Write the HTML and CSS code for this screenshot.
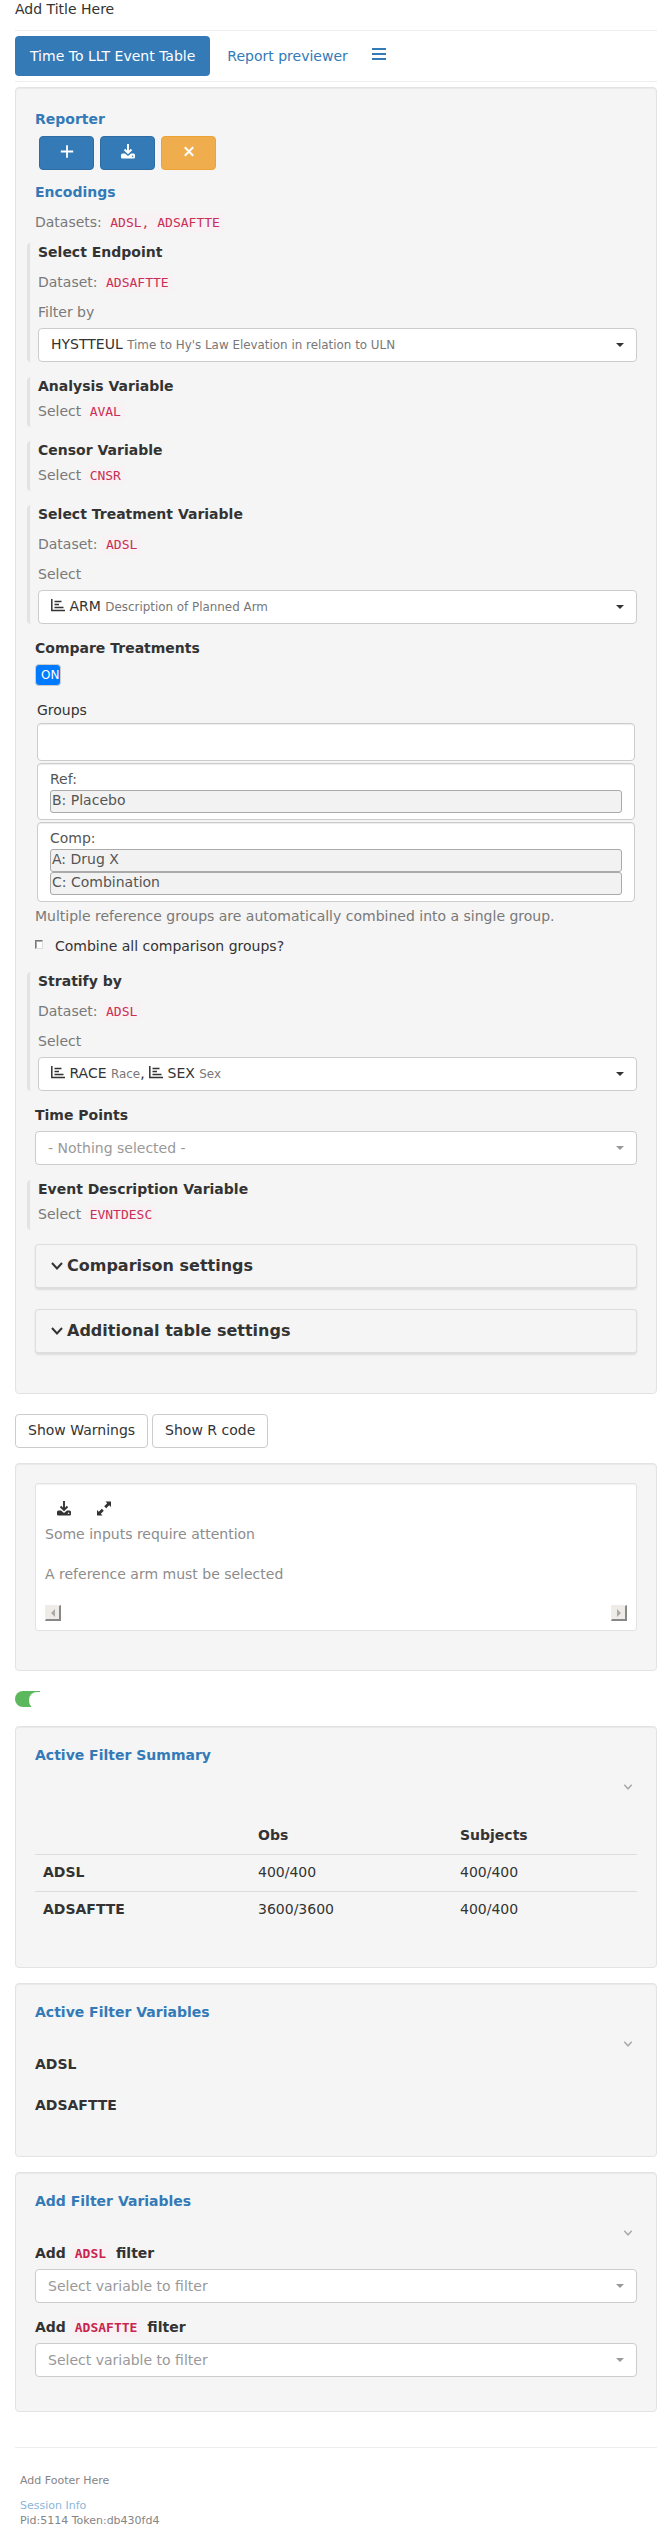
FILE: index.html
```html
<!DOCTYPE html>
<html lang="en">
<head>
<meta charset="utf-8">
<title>Add Title Here</title>
<link rel="stylesheet" href="styles.css">
</head>
<body>
<svg class="defs" width="0" height="0">
  <symbol id="download" viewBox="0 0 14 15"><path d="M7 0V9M3.500 5.500L7 9l3.500-3.500" fill="none" stroke="currentColor" stroke-width="1.900"/><path d="M1.500 9.500H4L7 12l3-2.500h2.500A1.500 1.500 0 0 1 14 11v2.300a1.200 1.200 0 0 1-1.200 1.200H1.200A1.200 1.200 0 0 1 0 13.300V11a1.500 1.500 0 0 1 1.500-1.500zM11.600 11.400a.8.8 0 1 0 0 1.600.8.8 0 0 0 0-1.600z" fill="currentColor" fill-rule="evenodd"/></symbol>
  <symbol id="expand" viewBox="0 0 14 14"><path d="M8.500 0H14V5.500L12.200 3.800 9.200 6.800 7.200 4.800l3-3zM5.500 14H0V8.500l1.800 1.700 3-3 2 2-3 3z" fill="currentColor"/></symbol>
  <symbol id="chart" viewBox="0 0 14 13"><path d="M.8 0V11.500H14M3.500 2.500H10.500M3.500 5.500H8M3.500 8.500H12.500" fill="none" stroke="currentColor" stroke-width="1.500"/></symbol>
  <symbol id="chevron" viewBox="0 0 12 8"><path d="M1 1l5 5.500L11 1" fill="none" stroke="currentColor" stroke-width="2"/></symbol>
</svg>
<header class="title">Add Title Here</header>
<nav class="tabs">
  <a class="tab tab-active">Time To LLT Event Table</a>
  <a class="tab">Report previewer</a>
  <svg class="menu" viewBox="0 0 14 12"><path d="M0 1h14M0 6h14M0 11h14" stroke="currentColor" stroke-width="2"/></svg>
</nav>
<main>
  <section class="well encodings">
    <h4 class="heading">Reporter</h4>
    <div class="reporter">
      <button class="btn primary"><svg class="ico" viewBox="0 0 14 14"><path d="M7 .8v12.400M.8 7h12.400" stroke="currentColor" stroke-width="1.800"/></svg></button>
      <button class="btn primary"><svg class="ico"><use href="#download"/></svg></button>
      <button class="btn warning"><svg class="ico" viewBox="0 0 14 14"><path d="M2.800 2.800l8.400 8.400M11.200 2.800l-8.400 8.400" stroke="currentColor" stroke-width="2"/></svg></button>
    </div>
    <h4 class="heading">Encodings</h4>
    <p class="help datasets">Datasets: <code>ADSL, ADSAFTTE</code></p>
    <div class="extract endpoint">
      <b>Select Endpoint</b>
      <p class="help">Dataset: <code>ADSAFTTE</code></p>
      <p class="help">Filter by</p>
      <div class="select"><span>HYSTTEUL <small>Time to Hy's Law Elevation in relation to ULN</small></span><i class="caret"></i></div>
    </div>
    <div class="extract compact"><b>Analysis Variable</b><p class="help">Select <code>AVAL</code></p></div>
    <div class="extract compact"><b>Censor Variable</b><p class="help">Select <code>CNSR</code></p></div>
    <div class="extract">
      <b>Select Treatment Variable</b>
      <p class="help">Dataset: <code>ADSL</code></p>
      <p class="help">Select</p>
      <div class="select"><span><svg class="chart"><use href="#chart"/></svg> ARM <small>Description of Planned Arm</small></span><i class="caret"></i></div>
    </div>
    <b class="label">Compare Treatments</b>
    <div class="on-switch">ON</div>
    <div class="groups">
      <div class="groups-label">Groups</div>
      <div class="bucket bucket-empty"></div>
      <div class="bucket"><div class="bucket-name">Ref:</div><div class="item">B: Placebo</div></div>
      <div class="bucket"><div class="bucket-name">Comp:</div><div class="item">A: Drug X</div><div class="item">C: Combination</div></div>
    </div>
    <p class="help note">Multiple reference groups are automatically combined into a single group.</p>
    <label class="check"><i class="box"></i>Combine all comparison groups?</label>
    <div class="extract">
      <b>Stratify by</b>
      <p class="help">Dataset: <code>ADSL</code></p>
      <p class="help">Select</p>
      <div class="select"><span><svg class="chart"><use href="#chart"/></svg> RACE <small>Race</small>, <svg class="chart"><use href="#chart"/></svg> SEX <small>Sex</small></span><i class="caret"></i></div>
    </div>
    <b class="label">Time Points</b>
    <div class="select placeholder time-points"><span>- Nothing selected -</span><i class="caret"></i></div>
    <div class="extract compact"><b>Event Description Variable</b><p class="help">Select <code>EVNTDESC</code></p></div>
    <div class="panel"><svg class="chevron"><use href="#chevron"/></svg>Comparison settings</div>
    <div class="panel"><svg class="chevron"><use href="#chevron"/></svg>Additional table settings</div>
  </section>
  <div class="actions"><button class="btn">Show Warnings</button><button class="btn">Show R code</button></div>
  <section class="well output">
    <div class="output-box">
      <div class="tools"><svg class="ico"><use href="#download"/></svg><svg class="ico"><use href="#expand"/></svg></div>
      <p>Some inputs require attention</p>
      <p>A reference arm must be selected</p>
      <div class="scrollbar"><span class="arrow left"></span><span class="arrow right"></span></div>
    </div>
  </section>
  <div class="toggle"><span></span></div>
  <section class="well summary">
    <h4 class="heading">Active Filter Summary</h4>
    <svg class="chevron fold"><use href="#chevron"/></svg>
    <table>
      <tr><th></th><th>Obs</th><th>Subjects</th></tr>
      <tr><th>ADSL</th><td>400/400</td><td>400/400</td></tr>
      <tr><th>ADSAFTTE</th><td>3600/3600</td><td>400/400</td></tr>
    </table>
  </section>
  <section class="well variables">
    <h4 class="heading">Active Filter Variables</h4>
    <svg class="chevron fold"><use href="#chevron"/></svg>
    <b>ADSL</b>
    <b>ADSAFTTE</b>
  </section>
  <section class="well add">
    <h4 class="heading">Add Filter Variables</h4>
    <svg class="chevron fold"><use href="#chevron"/></svg>
    <b>Add <code>ADSL</code> filter</b>
    <div class="select placeholder"><span>Select variable to filter</span><i class="caret"></i></div>
    <b>Add <code>ADSAFTTE</code> filter</b>
    <div class="select placeholder"><span>Select variable to filter</span><i class="caret"></i></div>
  </section>
</main>
<footer>
  <p>Add Footer Here</p>
  <a>Session Info</a>
  <div>Pid:5114 Token:db430fd4</div>
</footer>
</body>
</html>
```
FILE: styles.css
```css
* { box-sizing: border-box; }
body { margin: 0; padding: 0 15px; font: 14px/20px "DejaVu Sans", sans-serif; color: #333; background: #fff; }
p, h4 { margin: 0; }
b { display: block; }
svg { display: block; flex: none; }
.defs { position: absolute; }
.title { height: 31px; border-bottom: 1px solid #eee; line-height: 19px; }
.tabs { display: flex; gap: 2px; height: 51px; padding-top: 5px; border-bottom: 1px solid #eee; color: #337ab7; }
.tab { height: 40px; padding: 10px 15px; border-radius: 4px; }
.tab-active { background: #337ab7; color: #fff; }
.menu { width: 14px; height: 12px; margin: 12px 0 0 7px; }
.well { margin-top: 15px; padding: 18px 19px 19px; border: 1px solid #e3e3e3; border-radius: 4px; background: #f5f5f5; box-shadow: inset 0 1px 1px rgba(0,0,0,.05); }
.encodings { margin-top: 5px; padding-top: 21px; height: 1307px; }
.heading { font-size: 14px; line-height: 20px; color: #337ab7; }
.reporter { display: flex; gap: 6px; margin: 7px 4px 12px; }
.btn { height: 34px; padding: 0 12px 2px; border: 1px solid #ccc; border-radius: 4px; background: #fff; color: #333; font: inherit; }
.reporter .btn { width: 55px; display: flex; justify-content: center; padding-top: 7px; color: #fff; }
.reporter .primary { background: #337ab7; border-color: #2e6da4; }
.reporter .warning { background: #f0ad4e; border-color: #eea236; }
.ico { width: 14px; height: 15px; }
.help { color: #737373; opacity: .95; }
code { padding: 2px 4px; border-radius: 4px; background: #f9f2f4; color: #c7254e; font: 13px/1 "DejaVu Sans Mono", monospace; }
b code { font-weight: bold; }
.datasets { margin: 10px 0 11px; }
.extract { display: flow-root; margin: 0 0 14px -8px; padding-left: 8px; border-left: 3px solid #e3e3e3; border-radius: 4px; height: 119px; }
.extract b { margin-top: -1px; }
.extract .help { margin-top: 10px; }
.endpoint { margin-bottom: 15px; }
.compact { height: 50px; }
.compact .help { margin-top: 5px; }
.select { display: flex; justify-content: space-between; align-items: center; height: 34px; padding: 0 12px; border: 1px solid #ccc; border-radius: 4px; background: #fff; }
.extract .select { margin-top: 6px; }
.extract .select span { padding-bottom: 2px; }
.select small { font-size: 11.9px; color: #777; }
.caret { width: 8px; height: 4px; border: 4px solid transparent; border-top-color: currentColor; border-bottom: 0; }
.placeholder { color: #999; }
.chart { display: inline-block; width: 14px; height: 13px; vertical-align: -1px; }
.label { display: block; margin-bottom: 6px; }
.on-switch { width: 26px; height: 22px; padding-left: 5px; border: 1px solid #ccc; border-radius: 4px; background: #007bff; color: #fff; font-size: 12px; line-height: 20px; overflow: hidden; white-space: nowrap; }
.groups { margin: 14px 2px 4px; }
.groups-label { margin-bottom: 3px; }
.bucket { margin-bottom: 2px; padding: 5px 12px 6px; border: 1px solid #ccc; border-radius: 4px; background: #fff; box-shadow: inset 0 1px 1px rgba(0,0,0,.075); color: #555; }
.bucket-empty { height: 38px; }
.bucket-name { margin-bottom: 1px; }
.item { height: 23px; padding-left: 1px; border: 1px solid #aaa; border-radius: 3px; background: #f2f2f2; line-height: 19px; }
.check { display: flex; align-items: center; gap: 12px; margin: 10px 0 16px; }
.box { width: 8px; height: 9px; margin-top: -3px; border: 1px solid #ddd; border-top-color: #777; border-left-color: #777; background: #fff; box-shadow: inset 1px 1px #aaa; }
.time-points { margin-bottom: 15px; }
.panel { display: flex; align-items: center; gap: 4px; height: 45px; margin-bottom: 20px; padding: 0 15px; border: 1px solid #ddd; border-bottom-width: 2px; border-radius: 4px; box-shadow: 0 1px 2px rgba(0,0,0,.1); font-size: 16px; font-weight: bold; }
.chevron { width: 12px; height: 8px; }
.actions { display: flex; gap: 4px; margin-top: 20px; }
.output { height: 208px; padding-top: 19px; }
.output-box { height: 148px; padding: 17px 9px 9px; border: 1px solid #e3e3e3; border-radius: 3px; background: #fff; color: #8c8c8c; box-shadow: inset 0 1px 1px rgba(0,0,0,.05); }
.tools { display: flex; gap: 26px; height: 23px; padding-left: 12px; color: #333; }
.output-box p { margin-bottom: 20px; }
.scrollbar { display: flex; justify-content: space-between; padding-top: 1px; }
.arrow { display: flex; align-items: center; justify-content: center; width: 16px; height: 16px; border: 1px solid #eee; border-right: 2px solid #888; border-bottom: 2px solid #888; background: #efebe7; }
.arrow::before { content: ""; border: 4px solid transparent; }
.left::before { border-right-color: #aaa; border-left: 0; }
.right::before { border-left-color: #aaa; border-right: 0; }
.toggle { width: 25px; height: 16px; margin: 20px 0 19px; border-radius: 8px 0 0 8px; background: #5cb85c; overflow: hidden; }
.toggle span { display: block; width: 16px; height: 17px; margin: 1px 0 0 14px; border-radius: 8px 0 0 8px; background: #fff; }
.summary { height: 242px; }
.fold { width: 10px; height: 6px; margin: 19px 4px 0 auto; color: #aaa; }
table { width: 100%; margin-top: 27px; border-collapse: collapse; table-layout: fixed; }
tr { height: 37px; }
tr + tr { border-top: 1px solid #ddd; }
th, td { padding: 8px; text-align: left; }
tr + tr > * { padding: 7px 8px 9px; }
th:nth-child(1) { width: 215px; }
th:nth-child(2) { width: 202px; }
.variables { height: 174px; }
.variables b { margin: 7px 0 21px; }
.add { height: 240px; }
.add b { margin: 7px 0 6px; }
.add code { margin-right: 1px; }
.add .select + b { margin-top: 14px; }
footer { margin-top: 35px; padding: 25px 5px 0; border-top: 1px solid #eee; font-size: 11px; line-height: 15px; color: #858585; }
footer p { margin-bottom: 10px; }
footer a { display: block; color: #8bb5da; }
```
